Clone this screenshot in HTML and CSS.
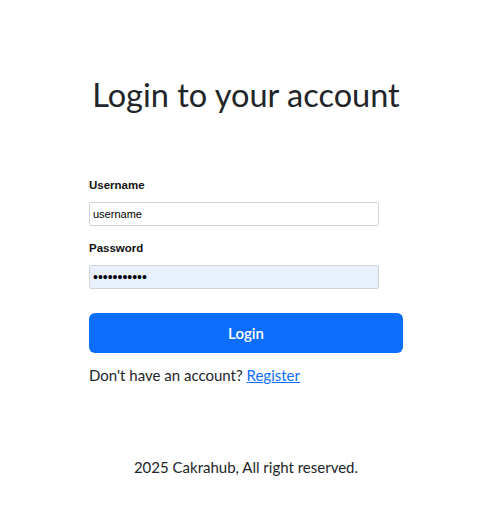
FILE: index.html
```html
<!DOCTYPE html>
<html lang="en">
<head>
<meta charset="utf-8">
<title>Login</title>
<link rel="stylesheet" href="styles.css">
</head>
<body>
<div class="wrap">
  <main class="card">
    <h1 class="title">Login to your account</h1>
    <form class="form">
      <label class="label" for="u">Username</label>
      <input class="input" id="u" type="text" value="username">
      <label class="label" for="p">Password</label>
      <input class="input input-filled" id="p" type="password" value="password123">
      <button class="btn" type="button">Login</button>
    </form>
    <p class="signup">Don't have an account? <a class="link" href="#">Register</a></p>
  </main>
  <footer class="footer">2025 Cakrahub, All right reserved.</footer>
</div>
</body>
</html>
```
FILE: styles.css
```css
* { box-sizing: border-box; }
html, body { margin: 0; background: #fff; }
body { font-family: Lato, "Noto Sans", sans-serif; color: #212529; }
.wrap { padding-left: 6px; }
.card { width: 314px; margin: 0 auto; padding-top: 71px; }
.title { margin: 0 -20px; font-size: 32.5px; font-weight: 400; line-height: 48px; text-align: center; color: #212529; white-space: nowrap; }
.form { display: flex; flex-direction: column; margin-top: 59px; }
.label { font-family: "Liberation Sans", Arial, sans-serif; font-weight: 700; font-size: 11.5px; line-height: 14px; color: #111; margin-bottom: 10px; }
.input { width: 290px; height: 24px; border: 1px solid #ced4da; border-radius: 2px; padding: 0 3px; font-family: "Liberation Sans", Arial, sans-serif; font-size: 11px; color: #000; background: #fff; margin-bottom: 15px; }
.input-filled { background: #e8f0fe; font-size: 14px; }
.btn { height: 40px; margin-top: 9px; border: 0; border-radius: 6px; background: #0d6efd; color: #fff; font-family: Lato, "Noto Sans", sans-serif; font-size: 15px; font-weight: 600; }
.signup { margin: 10px 0 0; font-size: 15px; line-height: 24px; color: #212529; }
.link { color: #0d6efd; text-decoration: underline; }
.footer { margin-top: 68px; text-align: center; font-size: 15px; line-height: 24px; color: #212529; }
```
